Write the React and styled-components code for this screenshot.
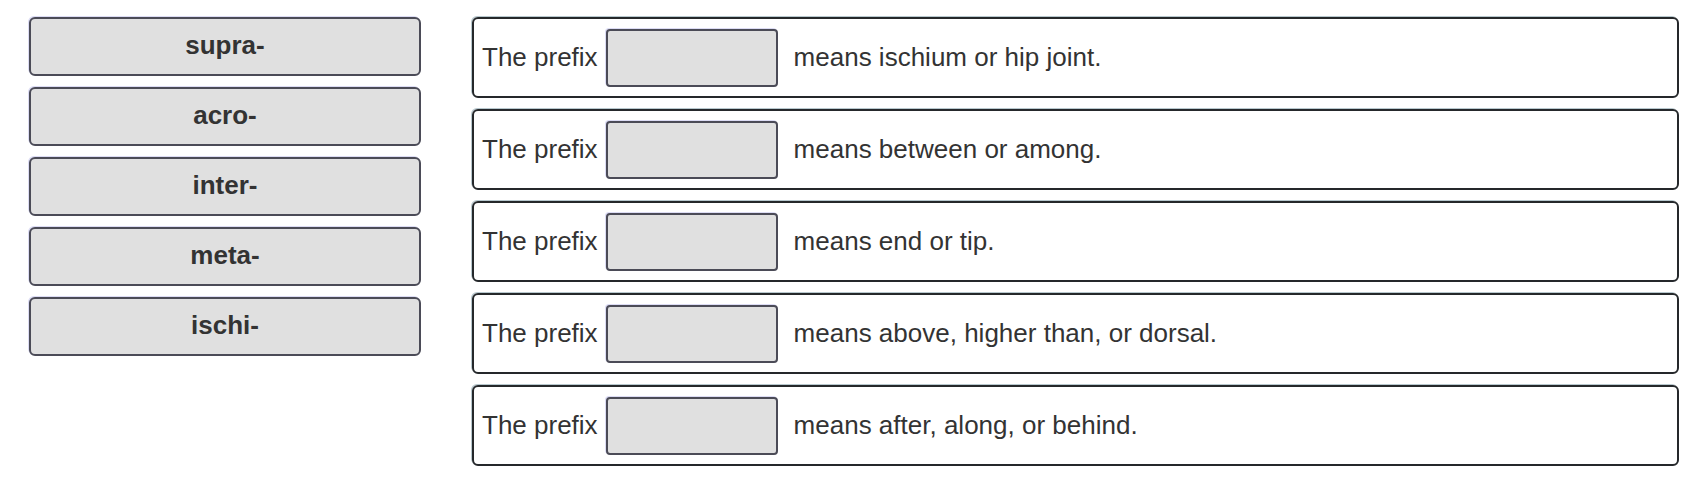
import React from "react";
import styled, { createGlobalStyle } from "styled-components";

const GlobalStyle = createGlobalStyle`
  html, body {
    margin: 0;
    padding: 0;
    background: #fff;
    font-family: "Liberation Sans", Arial, Helvetica, sans-serif;
  }
`;

const Page = styled.div`
  display: flex;
  align-items: flex-start;
  gap: 51px;
  padding: 17px 17px 0 29px;
  color: #333;
`;

const Choices = styled.div`
  width: 392px;
  flex: none;
  display: flex;
  flex-direction: column;
  gap: 11px;
`;

const Tile = styled.div`
  box-sizing: border-box;
  height: 59px;
  display: flex;
  align-items: center;
  justify-content: center;
  background: #e0e0e0;
  border: 2px solid #4b4b57;
  border-radius: 6px;
  box-shadow: -1px -1px 0 #dcdcf4;
  font-size: 26px;
  font-weight: bold;
  color: #333;
  padding-bottom: 2px;
`;

const Rows = styled.div`
  flex: 1;
  display: flex;
  flex-direction: column;
  gap: 11px;
`;

const Row = styled.div`
  box-sizing: border-box;
  height: 81px;
  display: flex;
  align-items: center;
  border: 2px solid #25282b;
  border-radius: 6px;
  box-shadow: -1px -1px 0 #b8c8ce;
  padding-left: 8px;
  font-size: 26px;
  color: #333;
`;

const Label = styled.span`
  white-space: nowrap;
`;

const Drop = styled.div`
  box-sizing: border-box;
  width: 172px;
  height: 58px;
  margin: 0 16px 0 8px;
  background: #e0e0e0;
  border: 2px solid #4b4b57;
  border-radius: 4px;
  box-shadow: -1px -1px 0 #dcdcf4;
`;

const choices = ["supra-", "acro-", "inter-", "meta-", "ischi-"];

const meanings = [
  "means ischium or hip joint.",
  "means between or among.",
  "means end or tip.",
  "means above, higher than, or dorsal.",
  "means after, along, or behind.",
];

export default function App() {
  return (
    <>
      <GlobalStyle />
      <Page>
        <Choices>
          {choices.map((c) => (
            <Tile key={c}>{c}</Tile>
          ))}
        </Choices>
        <Rows>
          {meanings.map((m) => (
            <Row key={m}>
              <Label>The prefix</Label>
              <Drop />
              <Label>{m}</Label>
            </Row>
          ))}
        </Rows>
      </Page>
    </>
  );
}
